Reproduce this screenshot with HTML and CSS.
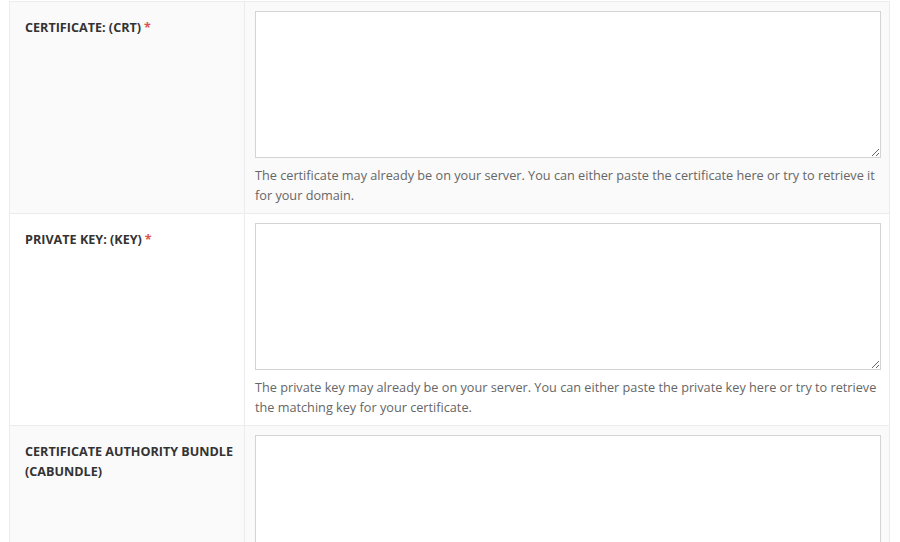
FILE: index.html
```html
<!DOCTYPE html>
<html>
<head>
<meta charset="utf-8">
<link rel="stylesheet" href="styles.css">
</head>
<body>
<div class="wrap">
<table class="form-table">
  <tr class="alt">
    <th class="label">CERTIFICATE: (CRT)<span class="req">*</span></th>
    <td class="field">
      <textarea class="box"></textarea>
      <p class="help">The certificate may already be on your server. You can either paste the certificate here or try to retrieve it for your domain.</p>
    </td>
  </tr>
  <tr>
    <th class="label">PRIVATE KEY: (KEY)<span class="req">*</span></th>
    <td class="field">
      <textarea class="box"></textarea>
      <p class="help">The private key may already be on your server. You can either paste the private key here or try to retrieve the matching key for your certificate.</p>
    </td>
  </tr>
  <tr class="alt">
    <th class="label">CERTIFICATE AUTHORITY BUNDLE (CABUNDLE)</th>
    <td class="field">
      <textarea class="box"></textarea>
      <p class="help">&nbsp;</p>
    </td>
  </tr>
</table>
</div>
</body>
</html>
```
FILE: styles.css
```css
html, body {
  margin: 0;
  padding: 0;
  background: #fff;
}
.wrap {
  padding: 1px 10px 0 9px;
}
.form-table {
  width: 881px;
  table-layout: fixed;
  border-collapse: collapse;
  border: 1px solid #ececec;
  font-family: "Open Sans", sans-serif;
}
.form-table tr {
  border-bottom: 1px solid #ececec;
}
.form-table tr.alt {
  background: #fafafa;
}
.label {
  width: 214px;
  padding: 16px 5px 10px 15px;
  text-align: left;
  vertical-align: top;
  font-size: 12.6px;
  font-weight: 700;
  line-height: 20px;
  color: #333;
  border-right: 1px solid #ececec;
}
.req {
  color: #d9534f;
  margin-left: 3px;
}
.field {
  padding: 9px 8px 8px 10px;
  vertical-align: top;
}
.box {
  display: block;
  box-sizing: border-box;
  width: 626px;
  height: 147px;
  margin: 0;
  border: 1px solid #d4d4d4;
  background: #fff;
  resize: vertical;
}
.help {
  margin: 7px 0 0 0;
  font-size: 12.7px;
  line-height: 20px;
  color: #666;
}
```
